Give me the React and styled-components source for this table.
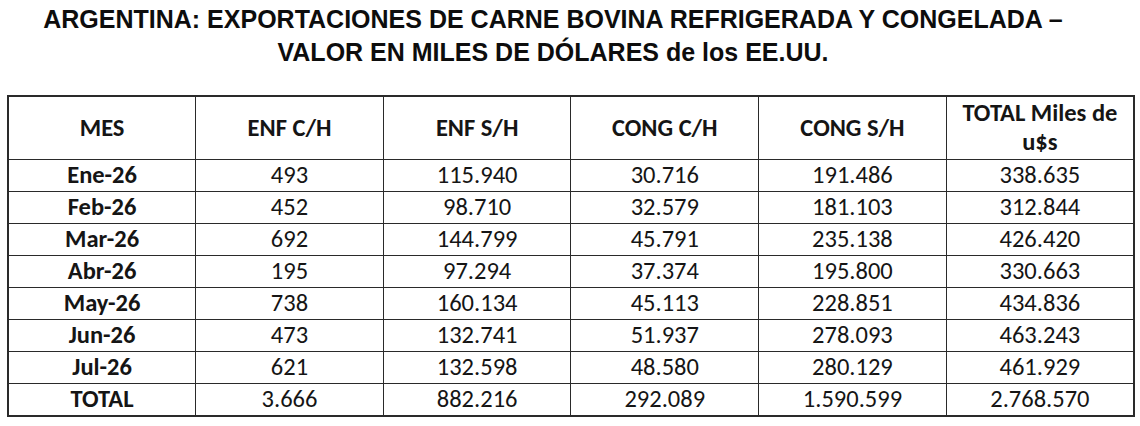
import React from 'react';
import styled, { createGlobalStyle } from 'styled-components';

const GlobalStyle = createGlobalStyle`
  html, body {
    margin: 0;
    padding: 0;
    background: #fff;
  }
`;

const Page = styled.div`
  width: 1140px;
  height: 426px;
  padding: 3px 5px 0 7px;
  box-sizing: border-box;
  background: #fff;
`;

const Title = styled.h1`
  margin: 0 36px 0 0;
  font-family: "Liberation Sans", Arial, sans-serif;
  font-weight: bold;
  font-size: 25px;
  line-height: 33px;
  text-align: center;
  color: #0d0d0d;
`;

const Table = styled.table`
  margin-top: 26px;
  width: 1128px;
  border-collapse: collapse;
  table-layout: fixed;
  font-family: "Carlito", "Lato", sans-serif;
  font-size: 24.5px;
  color: #151515;
  border: 2px solid #2a2a2a;
`;

const Cell = styled.td`
  border: 1.5px solid #2a2a2a;
  text-align: center;
  padding: 0 4px;
  height: 31px;
  line-height: 29px;
  font-weight: ${(p) => (p.$bold ? 700 : 400)};
`;

const HeadCell = styled.th`
  border: 1.5px solid #2a2a2a;
  text-align: center;
  padding: 2px 6px;
  height: 57px;
  line-height: 29px;
  font-weight: 700;
`;

const headers = ['MES', 'ENF C/H', 'ENF S/H', 'CONG C/H', 'CONG S/H', 'TOTAL Miles de u$s'];

const rows = [
  ['Ene-26', '493', '115.940', '30.716', '191.486', '338.635'],
  ['Feb-26', '452', '98.710', '32.579', '181.103', '312.844'],
  ['Mar-26', '692', '144.799', '45.791', '235.138', '426.420'],
  ['Abr-26', '195', '97.294', '37.374', '195.800', '330.663'],
  ['May-26', '738', '160.134', '45.113', '228.851', '434.836'],
  ['Jun-26', '473', '132.741', '51.937', '278.093', '463.243'],
  ['Jul-26', '621', '132.598', '48.580', '280.129', '461.929'],
  ['TOTAL', '3.666', '882.216', '292.089', '1.590.599', '2.768.570'],
];

export default function App() {
  return (
    <Page>
      <GlobalStyle />
      <Title>
        ARGENTINA: EXPORTACIONES DE CARNE BOVINA REFRIGERADA Y CONGELADA –
        <br />
        VALOR EN MILES DE DÓLARES de los EE.UU.
      </Title>
      <Table>
        <thead>
          <tr>
            {headers.map((h) => (
              <HeadCell key={h}>{h}</HeadCell>
            ))}
          </tr>
        </thead>
        <tbody>
          {rows.map((row) => (
            <tr key={row[0]}>
              {row.map((v, i) => (
                <Cell key={i} $bold={i === 0}>
                  {v}
                </Cell>
              ))}
            </tr>
          ))}
        </tbody>
      </Table>
    </Page>
  );
}
